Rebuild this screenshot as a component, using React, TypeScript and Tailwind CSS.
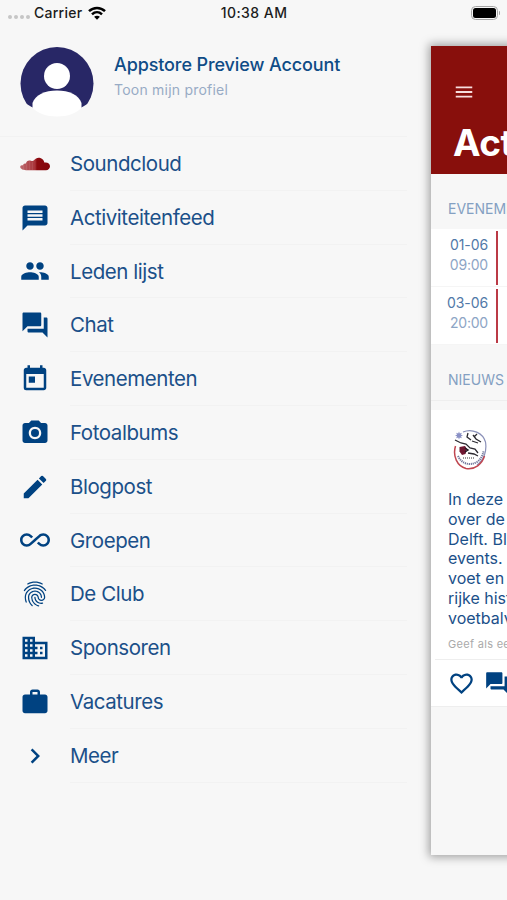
import type { ReactNode } from "react";
import type { IconType } from "react-icons";
import {
  MdAllInclusive,
  MdBusiness,
  MdChevronRight,
  MdEdit,
  MdFavoriteBorder,
  MdFingerprint,
  MdForum,
  MdMenu,
  MdMessage,
  MdPeople,
  MdPhotoCamera,
  MdToday,
  MdWork,
} from "react-icons/md";

function SoundcloudIcon() {
  return (
    <svg viewBox="0 0 30 14" className="h-[14px] w-[30px]">
      <defs>
        <linearGradient id="cloud" x1="0" x2="1">
          <stop offset="0" stopColor="#bd6b70" />
          <stop offset="0.5" stopColor="#a93238" />
          <stop offset="0.56" stopColor="#8c0a0f" />
          <stop offset="1" stopColor="#84060b" />
        </linearGradient>
      </defs>
      <path
        fill="url(#cloud)"
        d="M2 12.300C.5 11.500 0 10.500.3 9.300.8 8.200 2 8 3 8.200 3.500 6.800 4.600 6.500 6 6.500 6.300 4.200 8.500 2.800 11 3.800 12 4 13 4.300 14 3.300 15.500 1.200 18 .3 20.300 1 22.600 1.700 24 3.500 24.300 5.600 27.400 4.900 30 6.600 30 9.300 30 11.700 28.200 13.200 26 13.200H6C4.500 13.200 3 13 2 12.300Z"
      />
      <path
        d="M3.500 8v4.500M6.500 6.500v6.500M9.500 4v9M12.500 5v8"
        stroke="#fff"
        strokeOpacity="0.12"
        strokeWidth="0.7"
      />
    </svg>
  );
}

const entries: { label: string; Icon: IconType | (() => ReactNode) }[] = [
  { label: "Soundcloud", Icon: SoundcloudIcon },
  { label: "Activiteitenfeed", Icon: MdMessage },
  { label: "Leden lijst", Icon: MdPeople },
  { label: "Chat", Icon: MdForum },
  { label: "Evenementen", Icon: MdToday },
  { label: "Fotoalbums", Icon: MdPhotoCamera },
  { label: "Blogpost", Icon: MdEdit },
  { label: "Groepen", Icon: MdAllInclusive },
  { label: "De Club", Icon: MdFingerprint },
  { label: "Sponsoren", Icon: MdBusiness },
  { label: "Vacatures", Icon: MdWork },
  { label: "Meer", Icon: MdChevronRight },
];

function StatusBar() {
  return (
    <header className="grid h-[26px] shrink-0 grid-cols-[1fr_auto_1fr] items-center pb-px pl-2 pr-[7px] text-[14px] font-medium text-[#1c1c1c]">
      <div className="flex items-center">
        <span className="mr-[4px] mt-2 flex gap-[2px]">
          {[0, 1, 2, 3].map((i) => (
            <i key={i} className="size-[4px] rounded-full bg-[#c6c6c6]" />
          ))}
        </span>
        <span className="tracking-[0.25px]">Carrier</span>
        <svg viewBox="0 0 18 14" className="ml-[6px] h-[14px] w-[18px]" fill="none" stroke="#000" strokeWidth="2.500">
          <path d="M1 5.200C5.500.9 12.500.9 17 5.200" />
          <path d="M4 8.300C6.900 5.600 11.100 5.600 14 8.300" />
          <path d="M9 13.700 6.100 10.800C7.700 9.300 10.300 9.300 11.900 10.800Z" fill="#000" stroke="none" />
        </svg>
      </div>
      <span className="tracking-[0.45px]">10:38 AM</span>
      <div className="flex items-center justify-end gap-px">
        <span className="h-[14px] w-[27px] rounded-[4.500px] border border-[#a5a5a5] p-px">
          <span className="block h-full rounded-[2.500px] bg-black" />
        </span>
        <span className="h-[4px] w-[1.500px] rounded-r bg-[#a5a5a5]" />
      </div>
    </header>
  );
}

function Drawer() {
  return (
    <aside className="w-[431px] shrink-0">
      <div className="flex h-[111px] w-[407px] border-b border-[#f2f2f2] pl-5 pt-5">
        <svg viewBox="0 0 74 74" className="size-[74px]">
          <defs>
            <clipPath id="avatar">
              <circle cx="37" cy="37.500" r="36.500" />
            </clipPath>
          </defs>
          <g clipPath="url(#avatar)">
            <path d="M0 0H74V54L61.500 61.500H12.500L0 54Z" fill="#282766" />
            <circle cx="37" cy="30" r="13" fill="#fff" />
            <path d="M12.500 62V57C15 49 25 44.500 37 44.500S59 49 61.500 57V62C56 67 48 70.500 37 70.500S18 67 12.500 62Z" fill="#fff" />
          </g>
        </svg>
        <div className="ml-5 pt-[6px]">
          <div className="text-[18px] font-medium leading-[26px] tracking-[-0.110px] text-[#0f4c86]">
            Appstore Preview Account
          </div>
          <div className="text-[14px] leading-[24px] tracking-[0.220px] text-[#98abc5]">Toon mijn profiel</div>
        </div>
      </div>
      <nav>
        {entries.map(({ label, Icon }) => (
          <div key={label} className="flex h-[53.800px] w-[407px] items-center pl-5 text-[#004281]">
            <div className="flex size-[30px] items-center justify-center">
              <Icon size={30} />
            </div>
            <div className="ml-5 flex h-full flex-1 items-center border-b border-[#f2f2f2] pt-[2px] text-[20.500px] tracking-[-0.440px] text-[#1b5089]">
              {label}
            </div>
          </div>
        ))}
      </nav>
    </aside>
  );
}

function EventRow({ date, time }: { date: string; time: string }) {
  return (
    <div className="flex h-[58px] border-b border-[#f5f5f5] bg-white pt-[2px]">
      <div className="w-[57px] shrink-0 pt-[4px] text-right text-[14px] leading-[20px]">
        <div className="tracking-[-0.1px] text-[#5179a8]">{date}</div>
        <div className="tracking-[-0.2px] text-[#8da5c5]">{time}</div>
      </div>
      <div className="ml-[8px] h-[54px] w-[2px] bg-[#bb3a46]" />
    </div>
  );
}

function ClubLogo() {
  return (
    <svg viewBox="0 0 36 42" className="block h-[42px] w-[36px]" fill="none">
      <path d="M10 3C19-1 30 4 32.500 13 34 22 31 31 24 36" stroke="#8a90b8" strokeWidth="1.200" />
      <path d="M2.500 17C-.5 27 4 37 13 39.500 22 41 29 35 31.500 27" stroke="#bf4650" strokeWidth="1.500" />
      <path d="M5 27C8 34 16 37.500 24 33 28 30 30 26 30.500 22" stroke="#70769a" strokeWidth="2" strokeDasharray="1.200 0.8" />
      <path d="m6 2.500.8 2 2-.8-.8 2 2 .8-2 .8.8 2-2-.8-.8 2-.8-2-2 .8.8-2-2-.8 2-.8-.8-2 2 .8Z" fill="#8990c5" />
      <path d="M2 11 8 14 13 15 17 19 22 20 25 24M15 4 14 8l4 3M20 6l3 4 5 3M24 5l-3 3M19 12l6 2M15 24l6 1 4 2" stroke="#2c2a31" strokeWidth="1.300" />
      <path d="M6.500 18 12 17 14 20 12.500 25 9 26 6.500 22.500Z" fill="#6e1731" />
      <path d="m12 19 3 2-3 2" stroke="#201b23" strokeWidth="1.500" />
      <path d="M10 29H21" stroke="#777" strokeWidth="1.300" strokeDasharray="1 1" />
    </svg>
  );
}

const article = ["In deze", "over de", "Delft. Blijf", "events.", "voet en", "rijke historie", "voetbalvereniging"];

function AppPanel() {
  return (
    <main className="mt-[20px] h-[809px] w-[400px] shrink-0 bg-[#f7f7f7] shadow-[0_0_9px_2px_rgba(0,0,0,0.36)]">
      <div className="h-[128px] bg-[#880f0c] pl-[22px] pt-[35px] text-white">
        <MdMenu size={22} className="text-[#f7dede]" />
        <h1 className="mt-[18px] text-[37px] font-bold leading-[44px] tracking-[-0.5px]">Activiteiten</h1>
      </div>
      <div className="h-[55px] pl-[17px] pt-[25px] text-[14px] leading-5 text-[#84a0c2]">EVENEMENTEN</div>
      <EventRow date="01-06" time="09:00" />
      <EventRow date="03-06" time="20:00" />
      <div className="h-[56px] border-b border-[#eeeeee] pl-[17px] pt-[25px] text-[14px] leading-5 text-[#84a0c2]">NIEUWS</div>
      <section className="mt-[9px] h-[297px] border-b border-[#eeeeee] bg-white">
        <div className="pl-[22px] pt-[19px]">
          <ClubLogo />
        </div>
        <div className="pl-[17px] pt-[19px] text-[16px] leading-[19.800px] text-[#1b5089]">
          {article.map((line) => (
            <p key={line}>{line}</p>
          ))}
        </div>
        <div className="pl-[17px] pt-[7px] text-[11px] leading-4 tracking-[0.3px] text-[#aaaaaa]">Geef als eerste</div>
        <div className="ml-1 mt-[7px] flex h-[48px] items-center gap-[9px] border-t border-[#eeeeee] pl-[13px] text-[#004281]">
          <MdFavoriteBorder size={27} />
          <MdForum size={26} />
        </div>
      </section>
    </main>
  );
}

export default function App() {
  return (
    <div className="flex h-[900px] w-[507px] flex-col overflow-hidden bg-[#f7f7f7] font-['Inter','Liberation_Sans',sans-serif]">
      <StatusBar />
      <div className="flex">
        <Drawer />
        <AppPanel />
      </div>
    </div>
  );
}
